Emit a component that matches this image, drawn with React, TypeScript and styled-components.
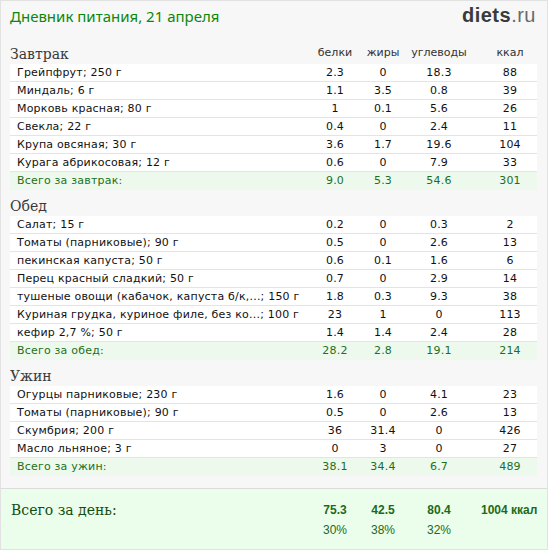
import React from "react";
import styled, { createGlobalStyle } from "styled-components";

const GlobalStyle = createGlobalStyle`
  html, body { margin: 0; padding: 0; background: #ffffff; }
  body { font-family: "DejaVu Sans", Verdana, sans-serif; }
`;

type Item = { name: string; p: string; f: string; c: string; k: string };
type Meal = { title: string; items: Item[]; total: Item; withHeads?: boolean };

const meals: Meal[] = [
  {
    title: "Завтрак",
    withHeads: true,
    items: [
      { name: "Грейпфрут; 250 г", p: "2.3", f: "0", c: "18.3", k: "88" },
      { name: "Миндаль; 6 г", p: "1.1", f: "3.5", c: "0.8", k: "39" },
      { name: "Морковь красная; 80 г", p: "1", f: "0.1", c: "5.6", k: "26" },
      { name: "Свекла; 22 г", p: "0.4", f: "0", c: "2.4", k: "11" },
      { name: "Крупа овсяная; 30 г", p: "3.6", f: "1.7", c: "19.6", k: "104" },
      { name: "Курага абрикосовая; 12 г", p: "0.6", f: "0", c: "7.9", k: "33" },
    ],
    total: { name: "Всего за завтрак:", p: "9.0", f: "5.3", c: "54.6", k: "301" },
  },
  {
    title: "Обед",
    items: [
      { name: "Салат; 15 г", p: "0.2", f: "0", c: "0.3", k: "2" },
      { name: "Томаты (парниковые); 90 г", p: "0.5", f: "0", c: "2.6", k: "13" },
      { name: "пекинская капуста; 50 г", p: "0.6", f: "0.1", c: "1.6", k: "6" },
      { name: "Перец красный сладкий; 50 г", p: "0.7", f: "0", c: "2.9", k: "14" },
      { name: "тушеные овощи (кабачок, капуста б/к,...; 150 г", p: "1.8", f: "0.3", c: "9.3", k: "38" },
      { name: "Куриная грудка, куриное филе, без ко...; 100 г", p: "23", f: "1", c: "0", k: "113" },
      { name: "кефир 2,7 %; 50 г", p: "1.4", f: "1.4", c: "2.4", k: "28" },
    ],
    total: { name: "Всего за обед:", p: "28.2", f: "2.8", c: "19.1", k: "214" },
  },
  {
    title: "Ужин",
    items: [
      { name: "Огурцы парниковые; 230 г", p: "1.6", f: "0", c: "4.1", k: "23" },
      { name: "Томаты (парниковые); 90 г", p: "0.5", f: "0", c: "2.6", k: "13" },
      { name: "Скумбрия; 200 г", p: "36", f: "31.4", c: "0", k: "426" },
      { name: "Масло льняное; 3 г", p: "0", f: "3", c: "0", k: "27" },
    ],
    total: { name: "Всего за ужин:", p: "38.1", f: "34.4", c: "6.7", k: "489" },
  },
];

const COLS = "1fr 48px 48px 64px 66px";

const Page = styled.div`
  width: 546px;
  height: 548px;
  border: 1px solid #e2e2e2;
  background: #f7f7f7;
  display: flex;
  flex-direction: column;
  overflow: hidden;
`;

const Header = styled.div`
  height: 37px;
  display: flex;
  justify-content: space-between;
  align-items: flex-start;
  padding: 0 11px 0 9px;
`;

const Title = styled.h1`
  margin: 5px 0 0;
  font-family: "Noto Sans", "DejaVu Sans", sans-serif;
  font-weight: normal;
  font-size: 15px;
  line-height: 20px;
  color: #0b870b;
`;

const Logo = styled.div`
  margin-top: 3px;
  font-family: "Liberation Sans", Arial, sans-serif;
  font-size: 20px;
  line-height: 22px;
  color: #3a3a3a;
  letter-spacing: 0.5px;
`;

const LogoBold = styled.span`
  font-weight: bold;
`;

const LogoLight = styled.span`
  color: #6a6a6a;
`;

const Section = styled.section`
  padding: 0 10px 0 9px;
`;

const SectionHead = styled.div`
  height: 26px;
  display: grid;
  grid-template-columns: ${COLS};
  align-items: end;
`;

const SectionTitle = styled.h2`
  margin: 0;
  font-family: "DejaVu Serif", Georgia, serif;
  font-weight: normal;
  font-size: 14px;
  line-height: 20px;
  color: #3a3a3a;
`;

const ColHead = styled.div<{ $pad?: boolean }>`
  font-size: 11px;
  line-height: 18px;
  color: #333333;
  text-align: center;
  padding-left: ${(p) => (p.$pad ? "12px" : "0")};
  padding-bottom: 2px;
`;

const Row = styled.div<{ $total?: boolean }>`
  display: grid;
  grid-template-columns: ${COLS};
  height: 17px;
  align-items: center;
  background: ${(p) => (p.$total ? "#eef9ee" : "#ffffff")};
  border-bottom: 1px solid ${(p) => (p.$total ? "#eef9ee" : "#e4e4e4")};
  font-size: 11px;
  letter-spacing: 0.2px;
  color: ${(p) => (p.$total ? "#1c701c" : "#111111")};
`;

const NameCell = styled.div`
  padding-left: 7px;
  white-space: nowrap;
  overflow: hidden;
`;

const NumCell = styled.div<{ $pad?: boolean }>`
  text-align: center;
  padding-left: ${(p) => (p.$pad ? "12px" : "0")};
`;

const Summary = styled.div`
  margin-top: auto;
  height: 61px;
  box-sizing: border-box;
  border-top: 1px solid #dcdcdc;
  background: #ebfeeb;
  padding: 13px 10px 0 9px;
  display: grid;
  grid-template-columns: ${COLS};
  grid-template-rows: 20px 20px;
  color: #1c6a1c;
`;

const SummaryLabel = styled.div`
  font-family: "DejaVu Serif", Georgia, serif;
  font-size: 14px;
  line-height: 16px;
  color: #124d12;
  padding-left: 1px;
`;

const SumValue = styled.div<{ $pad?: boolean }>`
  font-family: "Liberation Sans", Arial, sans-serif;
  font-weight: bold;
  font-size: 12px;
  line-height: 16px;
  text-align: center;
  padding-left: ${(p) => (p.$pad ? "10px" : "0")};
  white-space: nowrap;
`;

const Percent = styled.div`
  font-family: "Liberation Sans", Arial, sans-serif;
  font-size: 12px;
  line-height: 16px;
  text-align: center;
`;

function MealRow({ item, total }: { item: Item; total?: boolean }) {
  return (
    <Row $total={total}>
      <NameCell>{item.name}</NameCell>
      <NumCell>{item.p}</NumCell>
      <NumCell>{item.f}</NumCell>
      <NumCell>{item.c}</NumCell>
      <NumCell $pad>{item.k}</NumCell>
    </Row>
  );
}

export default function App() {
  return (
    <>
      <GlobalStyle />
      <Page>
        <Header>
          <Title>Дневник питания, 21 апреля</Title>
          <Logo>
            <LogoBold>diets</LogoBold>
            <LogoLight>.ru</LogoLight>
          </Logo>
        </Header>
        {meals.map((m) => (
          <Section key={m.title}>
            <SectionHead>
              <SectionTitle>{m.title}</SectionTitle>
              {m.withHeads && (
                <>
                  <ColHead>белки</ColHead>
                  <ColHead>жиры</ColHead>
                  <ColHead>углеводы</ColHead>
                  <ColHead $pad>ккал</ColHead>
                </>
              )}
            </SectionHead>
            {m.items.map((it, i) => (
              <MealRow key={i} item={it} />
            ))}
            <MealRow item={m.total} total />
          </Section>
        ))}
        <Summary>
          <SummaryLabel>Всего за день:</SummaryLabel>
          <SumValue>75.3</SumValue>
          <SumValue>42.5</SumValue>
          <SumValue>80.4</SumValue>
          <SumValue $pad>1004 ккал</SumValue>
          <div />
          <Percent>30%</Percent>
          <Percent>38%</Percent>
          <Percent>32%</Percent>
          <div />
        </Summary>
      </Page>
    </>
  );
}
